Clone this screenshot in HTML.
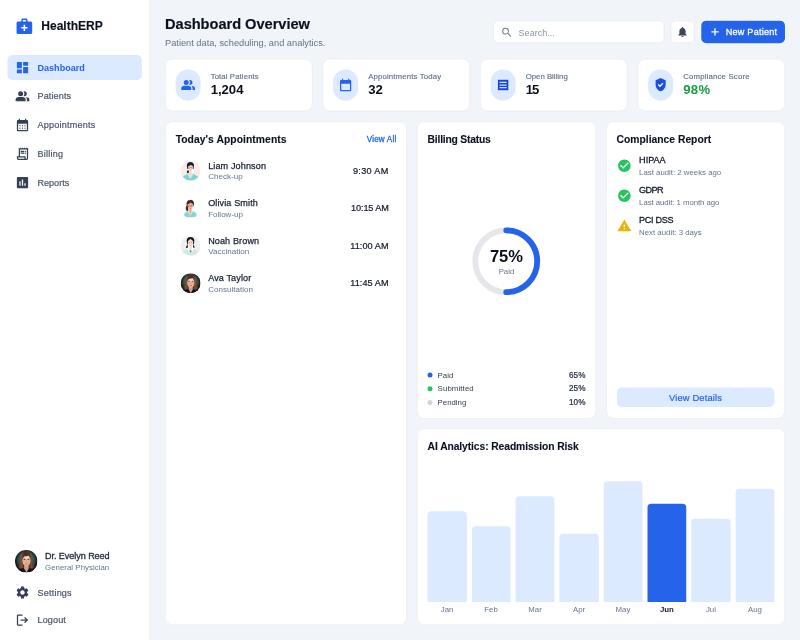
<!DOCTYPE html>
<html lang="en">
<head>
<meta charset="utf-8">
<title>HealthERP Dashboard</title>
<style>
*{box-sizing:border-box;margin:0;padding:0}
html,body{width:800px;height:640px;overflow:hidden;background:#f1f5f9}
body{font-family:"Liberation Sans",sans-serif;color:#0f172a}
#app{width:1280px;height:1024px;transform:scale(.625);transform-origin:0 0;position:relative;background:#f1f5f9;display:flex}
svg{display:block}
/* sidebar */
#side{width:240px;height:1024px;background:#fff;border-right:1px solid #e2e8f0;position:relative;flex:none}
.logo{position:absolute;left:24px;top:26px;height:32px;display:flex;align-items:center}
.logo svg{width:30px;height:30px}
.logo b{margin-left:12px;font-size:19.3px;font-weight:700;letter-spacing:0;color:#0b1120;-webkit-text-stroke:.2px currentColor}
.nav{position:absolute;left:12px;width:215px}
.nav a{display:flex;align-items:center;height:40px;margin-bottom:6px;padding-left:12px;border-radius:8px;color:#475569;font-size:14.5px;font-weight:400;text-decoration:none;-webkit-text-stroke:.3px currentColor}
.nav a svg{width:24px;height:24px;margin-right:12px;flex:none;fill:#334155}
.nav.b a{margin-bottom:4.5px}.nav a.on{background:#dbeafe;color:#2563eb;font-weight:700;-webkit-text-stroke:0}
.nav a.on svg{fill:#2563eb}
.prof{position:absolute;left:24px;top:880px;display:flex;align-items:center}
.prof .av{width:36px;height:36px;border-radius:50%;overflow:hidden;flex:none}
.prof .t{margin-left:12px}
.prof .n{font-size:14.5px;line-height:20px;font-weight:400;color:#1e293b;-webkit-text-stroke:.5px currentColor;letter-spacing:-.1px}
.prof .r{font-size:12.5px;line-height:16px;color:#64748b;letter-spacing:.08px}
/* main */
#main{position:relative;flex:1;height:1024px}
.abs{position:absolute}
h1{position:absolute;left:24px;top:22.2px;font-size:23.4px;line-height:32px;font-weight:700;color:#0b1120;-webkit-text-stroke:.25px currentColor;letter-spacing:-.05px;white-space:nowrap}
.sub{position:absolute;left:24px;top:58px;font-size:14.8px;line-height:20px;color:#64748b;white-space:nowrap}
.search{position:absolute;left:549px;top:33px;width:274px;height:36px;padding-top:2px;background:#fff;border:1px solid #e2e8f0;border-radius:8px;display:flex;align-items:center;font-size:14.5px;color:#8996aa}
.search svg{width:20px;height:20px;margin:0 8.700px 0 11px;fill:#718096}
.bell{position:absolute;left:833.2px;top:33px;width:37.8px;height:36px;background:#fff;border:1px solid #e2e8f0;border-radius:8px;display:flex;align-items:center;justify-content:center}
.bell svg{width:20px;height:20px;fill:#3b4758}
.newp{box-shadow:0 0 0 1.6px rgba(255,255,255,.75);position:absolute;left:882px;top:33px;width:134px;height:36px;background:#2563eb;border-radius:8px;color:#fff;font-size:14.5px;font-weight:400;-webkit-text-stroke:.45px #fff;letter-spacing:.42px;display:flex;align-items:center;white-space:nowrap}
.newp svg{width:20px;height:20px;margin:0 7px 0 12px;fill:#fff}
.card{position:absolute;background:#fff;border:1px solid #e5eaf1;border-radius:12px}
.stat{top:94px;width:236px;height:84px}
.stat .pill{position:absolute;left:16px;top:16px;width:40px;height:50px;border-radius:25px;background:#dbeafe;display:flex;align-items:center;justify-content:center}
.stat .pill svg{width:24px;height:24px;fill:#2563eb}
.stat .l{position:absolute;left:72px;top:18.9px;font-size:12.5px;letter-spacing:.15px;line-height:16px;color:#64748b;white-space:nowrap;-webkit-text-stroke:.25px currentColor}
.stat .v{position:absolute;left:72px;top:35.1px;font-size:21px;line-height:28px;font-weight:700;color:#0b0f1a;white-space:nowrap}
.pt{position:absolute;left:16px;top:16px;font-size:16.5px;line-height:24px;font-weight:700;color:#0b1120;-webkit-text-stroke:.15px currentColor;white-space:nowrap}

.pn{font-size:14.5px;letter-spacing:.2px;line-height:20px;color:#172033;white-space:nowrap;-webkit-text-stroke:.4px currentColor}
.ps{font-size:12.5px;letter-spacing:.15px;line-height:16px;color:#64748b;white-space:nowrap}
.viewall{position:absolute;right:16px;top:20px;font-size:13px;letter-spacing:.25px;line-height:16px;color:#2563eb;white-space:nowrap;-webkit-text-stroke:.45px currentColor}
.row{position:absolute;left:24px;right:24px;height:36px}
.row .av{position:absolute;left:0;top:2px;width:32px;height:32px;border-radius:50%;overflow:hidden}
.row .tx{position:absolute;left:44px;top:-.5px}.row .ps{position:relative;top:.5px;font-size:12.8px;letter-spacing:.05px}
.row .tm{position:absolute;right:4.4px;top:8px;font-size:14.6px;line-height:20px;color:#111827;white-space:nowrap;-webkit-text-stroke:.33px currentColor;letter-spacing:.12px}
.lg{position:absolute;left:16px;right:16px;height:16px;font-size:12.5px;line-height:16px;color:#334155;white-space:nowrap}
.lg i{position:absolute;left:0;top:4px;width:8px;height:8px;border-radius:50%}
.lg span{position:absolute;left:16px;top:0}
.lg b{position:absolute;right:0;top:0;color:#1e293b;font-weight:400;font-size:13px;-webkit-text-stroke:.35px currentColor}
.ci{position:absolute;left:16px;height:36px}
.ci svg{position:absolute;left:0;top:5px;width:24px;height:24px}
.ci .tx{position:absolute;left:36px;top:-1px}.ci .ps{letter-spacing:0;position:relative;top:.8px}
.ci .pn{font-weight:400;letter-spacing:0;position:relative;top:-.7px;color:#111827;-webkit-text-stroke:.45px currentColor}
.vd{position:absolute;left:16px;right:16px;bottom:17.2px;height:31.6px;border-radius:8px;background:#dbeafe;color:#2563eb;font-size:15px;letter-spacing:.2px;line-height:33.5px;text-align:center;-webkit-text-stroke:.3px currentColor}
.bar{position:absolute;bottom:36.500px;width:62.350px;background:#dbeafe;border-radius:6px 6px 0 0}
.bar.on{background:#2563eb}
.bl{position:absolute;bottom:16px;width:62.350px;text-align:center;font-size:12.5px;line-height:16px;color:#64748b}
.bl.on{color:#0f172a;font-weight:700}
</style>
</head>
<body>
<div id="app">
<aside id="side">
  <div class="logo">
    <svg viewBox="0 0 24 24"><path fill="#2563eb" d="M20 6h-4V4c0-1.100-.9-2-2-2h-4C8.900 2 8 2.900 8 4v2H4C2.900 6 2 6.900 2 8v12c0 1.100.9 2 2 2h16c1.100 0 2-.9 2-2V8c0-1.100-.9-2-2-2zM10 4h4v2h-4V4zm6 11h-3v3h-2v-3H8v-2h3v-3h2v3h3v2z"/></svg>
    <b>HealthERP</b>
  </div>
  <nav class="nav" style="top:88px">
    <a class="on"><svg viewBox="0 0 24 24"><path d="M3 13h8V3H3v10zm0 8h8v-6H3v6zm10 0h8V11h-8v10zm0-18v6h8V3h-8z"/></svg>Dashboard</a>
    <a><svg viewBox="0 0 24 24"><path d="M9 12a4 4 0 1 0 0-8 4 4 0 0 0 0 8zm-8 8v-2.800c0-.57.150-1.090.440-1.560.290-.48.680-.840 1.160-1.090 1.030-.52 2.080-.9 3.150-1.160C6.820 13.130 7.900 13 9 13s2.180.130 3.250.390c1.070.260 2.120.640 3.150 1.160.48.250.870.610 1.160 1.090.290.470.440.990.440 1.560V20H1zm18 0v-3c0-.730-.2-1.440-.610-2.110-.410-.680-.990-1.260-1.740-1.740.85.100 1.650.270 2.400.510s1.450.530 2.100.890c.6.330 1.060.7 1.380 1.110.310.410.470.850.470 1.340v3h-4zM19 8c0 1.100-.390 2.040-1.180 2.830C17.040 11.610 16.100 12 15 12c-.180 0-.420-.020-.7-.060-.280-.040-.520-.090-.7-.140.450-.530.800-1.130 1.040-1.780.240-.65.360-1.320.360-2.020s-.120-1.380-.360-2.030A5.900 5.900 0 0 0 13.600 4.200c.230-.080.470-.140.700-.160.230-.030.470-.040.700-.040 1.100 0 2.040.390 2.820 1.180C18.610 5.960 19 6.900 19 8z"/></svg><span style="letter-spacing:.2px">Patients</span></a>
    <a><svg viewBox="0 0 24 24"><path d="M5 22c-.55 0-1.020-.2-1.410-.590C3.200 21.020 3 20.550 3 20V6c0-.55.2-1.020.590-1.410C3.980 4.200 4.450 4 5 4h1V2h2v2h8V2h2v2h1c.55 0 1.020.2 1.410.590.390.390.590.860.590 1.410v14c0 .55-.2 1.020-.590 1.410-.390.390-.860.590-1.410.590H5zm0-2h14V10H5v10zm7-6a1 1 0 1 1 0-2 1 1 0 0 1 0 2zm-4 0a1 1 0 1 1 0-2 1 1 0 0 1 0 2zm8 0a1 1 0 1 1 0-2 1 1 0 0 1 0 2zm-4 4a1 1 0 1 1 0-2 1 1 0 0 1 0 2zm-4 0a1 1 0 1 1 0-2 1 1 0 0 1 0 2zm8 0a1 1 0 1 1 0-2 1 1 0 0 1 0 2z"/></svg><span style="letter-spacing:.35px">Appointments</span></a>
    <a><svg viewBox="0 0 24 24"><path d="M6 22c-.83 0-1.540-.29-2.130-.870C3.290 20.540 3 19.830 3 19v-3h3V2l1.500 1.500L9 2l1.500 1.500L12 2l1.500 1.500L15 2l1.500 1.500L18 2l1.500 1.500L21 2v17c0 .83-.29 1.540-.870 2.130-.590.580-1.300.870-2.130.870H6zm12-2c.28 0 .52-.1.710-.29.190-.19.290-.43.290-.710V5H8v11h9v3c0 .28.100.52.290.71.190.19.430.29.710.29zM9 9V7h6v2H9zm0 3v-2h6v2H9zm8-3a1 1 0 1 1 0-2 1 1 0 0 1 0 2zm0 3a1 1 0 1 1 0-2 1 1 0 0 1 0 2zM6 20h9v-2H5v1c0 .28.100.52.290.71.190.19.430.29.710.29z"/></svg><span style="letter-spacing:.35px">Billing</span></a>
    <a><svg viewBox="0 0 24 24"><path d="M19 3H5c-1.100 0-2 .9-2 2v14c0 1.100.9 2 2 2h14c1.100 0 2-.9 2-2V5c0-1.100-.9-2-2-2zM9 17H7v-7h2v7zm4 0h-2V7h2v10zm4 0h-2v-4h2v4z"/></svg>Reports</a>
  </nav>
  <div class="prof">
    <div class="av"><svg viewBox="0 0 36 36" width="36" height="36"><defs><radialGradient id="pbe" cx=".5" cy=".45" r=".54"><stop offset="0" stop-color="#6a8a86"/><stop offset=".6" stop-color="#3a5855"/><stop offset=".86" stop-color="#15221f"/><stop offset="1" stop-color="#030505"/></radialGradient><linearGradient id="phe" x1="0" x2="1"><stop offset="0" stop-color="#3e261a"/><stop offset=".2" stop-color="#7e563c"/><stop offset=".36" stop-color="#4a2e20"/><stop offset=".64" stop-color="#4e3222"/><stop offset=".8" stop-color="#7a5238"/><stop offset="1" stop-color="#38221a"/></linearGradient><filter id="pfe" x="-10%" y="-10%" width="120%" height="120%"><feGaussianBlur stdDeviation=".6"/></filter></defs><rect width="36" height="36" fill="url(#pbe)"/><g filter="url(#pfe)"><path d="M18.300 2.300c-5.800 0-9.200 3.600-9.800 9.600-.5 5.400-1.700 9.800-4 14.600 1.800 2.600 4.600 4.300 7.500 4.800h12.600c2.900-.5 5.700-2.200 7.500-4.800-2.300-4.800-3.500-9.200-4-14.600-.6-6-4-9.600-9.800-9.600z" fill="url(#phe)"/><path d="M3 36c.6-3.800 4-6.200 8.800-7h12.400c4.800.8 8.200 3.200 8.800 7z" fill="#10151f"/><path d="M14.600 25h7.200v4.500L18.300 36l-3.700-6.500z" fill="#d49d80"/><ellipse cx="18.300" cy="16.800" rx="6.500" ry="9.500" fill="#e2b49a"/><ellipse cx="19" cy="12.500" rx="4" ry="3.600" fill="#f4dccb" opacity=".85"/><ellipse cx="15" cy="19" rx="1.800" ry="2.200" fill="#e8a58e" opacity=".5"/><ellipse cx="21.800" cy="19" rx="1.800" ry="2.200" fill="#e8a58e" opacity=".5"/><path d="M11.600 15c.2-6 2.600-9 6.700-9s6.500 3 6.700 9c-1-3.200-2.200-5.200-3.400-6.300-1.900 1.200-4.900 1.700-6.700 1.200-1.400 1.300-2.500 2.900-3.300 5.100z" fill="#4e3222"/><ellipse cx="15.300" cy="14.600" rx="1.700" ry=".8" fill="#33231f"/><ellipse cx="21.300" cy="14.600" rx="1.700" ry=".8" fill="#33231f"/><path d="M17.700 15.500h1.200v4h-1.200z" fill="#c48e74" opacity=".7"/><ellipse cx="18.300" cy="22.300" rx="2.100" ry=".9" fill="#c25f66"/></g></svg></div>
    <div class="t"><div class="n">Dr. Evelyn Reed</div><div class="r">General Physician</div></div>
  </div>
  <nav class="nav b" style="top:927.5px">
    <a><svg viewBox="0 0 24 24"><path d="M19.140 12.940c.04-.3.060-.610.060-.940 0-.320-.020-.640-.070-.940l2.030-1.580a.490.490 0 0 0 .120-.610l-1.920-3.320a.488.488 0 0 0-.590-.220l-2.390.960c-.5-.380-1.030-.7-1.620-.940l-.360-2.540a.484.484 0 0 0-.480-.410h-3.840c-.240 0-.430.170-.470.410l-.360 2.540c-.590.240-1.130.570-1.620.940l-2.390-.960c-.220-.080-.470 0-.590.220L2.740 8.870c-.120.210-.080.470.120.610l2.030 1.580c-.050.300-.090.630-.090.940s.020.640.070.940l-2.030 1.580a.490.490 0 0 0-.120.610l1.920 3.320c.120.220.370.290.590.220l2.390-.960c.5.380 1.030.7 1.620.940l.360 2.540c.05.240.240.410.480.410h3.840c.240 0 .440-.170.470-.410l.360-2.540c.590-.240 1.130-.560 1.620-.940l2.390.960c.220.080.470 0 .590-.220l1.920-3.320c.120-.220.070-.470-.120-.610l-2.010-1.580zM12 15.600c-1.980 0-3.600-1.620-3.600-3.600s1.620-3.600 3.600-3.600 3.600 1.620 3.600 3.600-1.620 3.600-3.600 3.600z"/></svg><span style="letter-spacing:.32px">Settings</span></a>
    <a><svg viewBox="0 0 24 24"><path d="M5 21c-.55 0-1.020-.2-1.410-.590C3.200 20.020 3 19.550 3 19V5c0-.55.2-1.020.590-1.410C3.980 3.200 4.450 3 5 3h7v2H5v14h7v2H5zm11-4-1.380-1.450 2.550-2.550H9v-2h8.180l-2.550-2.550L16 7l5 5-5 5z"/></svg><span style="letter-spacing:.19px">Logout</span></a>
  </nav>
</aside>
<main id="main">
  <h1>Dashboard Overview</h1>
  <div class="sub">Patient data, scheduling, and analytics.</div>
  <div class="search"><svg viewBox="0 0 24 24"><path d="M15.500 14h-.79l-.28-.27A6.471 6.471 0 0 0 16 9.500 6.500 6.500 0 1 0 9.500 16c1.610 0 3.090-.59 4.230-1.570l.27.28v.79l5 4.990L20.490 19l-4.990-5zm-6 0C7.010 14 5 11.990 5 9.500S7.010 5 9.500 5 14 7.010 14 9.500 11.990 14 9.500 14z"/></svg>Search...</div>
  <div class="bell"><svg viewBox="0 0 24 24"><path d="M12 22c1.100 0 2-.9 2-2h-4a2 2 0 0 0 2 2zm6-6v-5c0-3.070-1.640-5.640-4.500-6.320V4c0-.83-.67-1.500-1.500-1.500s-1.500.67-1.500 1.500v.68C7.630 5.360 6 7.920 6 11v5l-2 2v1h16v-1l-2-2z"/></svg></div>
  <div class="newp"><svg viewBox="0 0 24 24"><path d="M19 13.300h-5.700V19h-2.600v-5.700H5v-2.600h5.700V5h2.600v5.700H19z"/></svg>New Patient</div>
  <div class="card stat" style="left:24px"><div class="pill"><svg viewBox="0 0 24 24"><path d="M9 12a4 4 0 1 0 0-8 4 4 0 0 0 0 8zm-8 8v-2.800c0-.57.150-1.090.440-1.560.290-.48.680-.840 1.160-1.090 1.030-.52 2.080-.9 3.150-1.160C6.820 13.130 7.900 13 9 13s2.180.130 3.250.390c1.070.260 2.120.640 3.150 1.160.48.250.870.610 1.160 1.090.290.470.440.990.440 1.560V20H1zm18 0v-3c0-.730-.2-1.440-.610-2.110-.410-.680-.990-1.260-1.740-1.740.85.100 1.650.270 2.400.510s1.450.530 2.100.890c.6.330 1.060.7 1.380 1.110.310.410.470.850.470 1.340v3h-4zM19 8c0 1.100-.390 2.040-1.180 2.830C17.040 11.610 16.100 12 15 12c-.180 0-.420-.020-.7-.060-.280-.040-.520-.090-.7-.140.450-.530.800-1.130 1.040-1.780.240-.65.360-1.320.360-2.020s-.120-1.380-.360-2.030A5.900 5.900 0 0 0 13.600 4.200c.230-.080.470-.140.700-.160.230-.030.470-.040.700-.040 1.100 0 2.040.390 2.820 1.180C18.610 5.960 19 6.900 19 8z"/></svg></div><div class="l">Total Patients</div><div class="v">1,204</div></div>
  <div class="card stat" style="left:276px"><div class="pill"><svg viewBox="0 0 24 24"><path d="M5 22c-.55 0-1.020-.2-1.410-.590C3.200 21.020 3 20.550 3 20V6c0-.55.2-1.020.590-1.410C3.980 4.200 4.450 4 5 4h1V2h2v2h8V2h2v2h1c.55 0 1.020.2 1.410.590.390.390.590.860.590 1.410v14c0 .55-.2 1.020-.590 1.410-.390.390-.860.590-1.410.590H5zm0-2h14V10H5v10z"/></svg></div><div class="l" style="letter-spacing:.22px">Appointments Today</div><div class="v">32</div></div>
  <div class="card stat" style="left:528px"><div class="pill"><svg viewBox="0 0 24 24"><path fill="#1745dc" stroke="#f4f8ff" stroke-width="1" paint-order="stroke" d="M3.600 3.600h16.800v16.800H3.600z"/><path fill="#cfe0fd" d="M6.300 6.800h11.400v2H6.300zM6.300 11h11.400v2H6.300zM6.300 15.200h11.400v2H6.300z"/></svg></div><div class="l" style="letter-spacing:0">Open Billing</div><div class="v" style="letter-spacing:-1.5px">15</div></div>
  <div class="card stat" style="left:780px"><div class="pill"><svg viewBox="0 0 24 24"><path fill="#1b4ee2" stroke="#f4f8ff" stroke-width="1.1" paint-order="stroke" d="M12 .900 3.900 4.200v6.900c0 5.050 3.450 9.760 8.100 10.910 4.650-1.150 8.100-5.860 8.100-10.910V4.200L12 .900z"/><path fill="#fff" d="M10.900 15.400 7.400 11.900l1.410-1.410 2.100 2.100 4.240-4.240 1.410 1.410-5.660 5.640z"/></svg></div><div class="l" style="letter-spacing:.28px">Compliance Score</div><div class="v" style="color:#14a03e;letter-spacing:.6px">98%</div></div>
  <div class="card" style="left:24px;top:194px;width:387.200px;height:806px"><div class="pt" style="letter-spacing:.11px">Today's Appointments</div><div class="viewall">View All</div>
    <div class="row" style="top:60px"><div class="av"><svg viewBox="0 0 32 32" width="32" height="32"><defs><filter id="ifa" x="-10%" y="-10%" width="120%" height="120%"><feGaussianBlur stdDeviation=".35"/></filter></defs><rect width="32" height="32" fill="#fcebe6"/><g filter="url(#ifa)"><path d="M15.600 1.300c-4.200 0-7 3-6.900 7.200.1 2.400.6 4.600 1.500 6.200-1.200 1.500-1.300 4.300.2 6.300l3.400 1h4.500l1.500-4c2-1.600 3.200-5 3.100-9.200C22.800 4.300 19.800 1.300 15.600 1.300z" fill="#fff"/><path d="M3.200 26.200c1.200-2.300 5.600-4.200 9.800-5.800l2.600 1.200 2.600-1.200c4.200 1.600 8.600 3.500 9.800 5.800L26 33H5z" fill="#7fd3d3"/><path d="M12.600 20.500l-1.500 1.100 4.100 7.600.4-6zM18.600 20.500l1.500 1.100-4.100 7.600-.4-6z" fill="#c8eeee"/><path d="M13.700 15.500h3.900v5.200l-1.900 7.700-2-7.700z" fill="#fbd9c8"/><path d="M11.500 15.300c-1.500.6-2 2.600-1 4.600.8.500 1.900.3 2.600-.4.300-1.400.1-3-.4-4.200z" fill="#16202e"/><path d="M11.700 9.500c0-2.500 1.700-3.800 3.900-3.800s4.100 1.300 4.100 3.800c0 3.600-1.700 7.200-4.100 7.200s-3.900-3.600-3.900-7.200z" fill="#fbd9c8"/><path d="M15.600 2.300c-3.600 0-5.900 2.500-5.800 6.200 0 1.900.5 3.900 1.300 5.400l1-.4c-.5-1.700-.6-3.400-.3-4.600 1.800-.3 3.600-1.200 4.700-2.500 1 1.300 2.300 2.100 3.500 2.400.3 1.500.2 3.100-.2 4.600l.7.300c.7-1.400 1-3.300 1-5.200.1-3.700-2.300-6.200-5.900-6.200z" fill="#16202e"/><g fill="#eef5f3" fill-opacity=".2" stroke="#3f5c68" stroke-width=".45"><rect x="11.9" y="10.2" width="3.3" height="2.3" rx=".7"/><rect x="16.5" y="10.2" width="3.3" height="2.3" rx=".7"/><path d="M15.200 11h1.300M11.900 10.800h-1M19.800 10.800h1" fill="none"/></g><circle cx="13.5" cy="11.4" r=".42" fill="#2b3a44"/><circle cx="18.1" cy="11.4" r=".42" fill="#2b3a44"/><ellipse cx="15.700" cy="15.300" rx=".9" ry=".5" fill="#e0524c"/></g></svg></div><div class="tx"><div class="pn">Liam Johnson</div><div class="ps">Check-up</div></div><div class="tm" style="letter-spacing:.5px">9:30 AM</div></div>
    <div class="row" style="top:120px"><div class="av"><svg viewBox="0 0 32 32" width="32" height="32"><defs><filter id="ifb" x="-10%" y="-10%" width="120%" height="120%"><feGaussianBlur stdDeviation=".35"/></filter></defs><rect width="32" height="32" fill="#fdfefe"/><g filter="url(#ifb)"><path d="M5.600 27.500c-.4-3 2.400-5.600 7.400-7.300l2.600 1.200 2.600-1.200c5 1.700 7.800 4.300 7.400 7.300-.3 1.900-2.200 3.100-4.600 3.100H10.200c-2.400 0-4.300-1.200-4.600-3.100z" fill="#86d6d8"/><path d="M12.800 20.300l-1.500 1.100 4 7.200.4-5.800zM18.400 20.300l1.500 1.100-4 7.200-.4-5.800z" fill="#c9f0f0"/><path d="M13.600 16.500h4v4.200l-1.900 7.400-2.100-7.400z" fill="#f3b088"/><path d="M10.600 11.500c-2.200 1.200-3.100 4.200-1.900 7.600.6 1.300 1.900 1.800 3.200 1.300.6-1.600.6-3.600 0-5.400-.5-1.500-.9-2.600-1.300-3.500z" fill="#4a2a22"/><path d="M11.200 10.600c0-2.700 1.900-4.200 4.300-4.200s4.300 1.500 4.300 4.200c0 3.800-1.800 7.700-4.300 7.700s-4.300-3.900-4.300-7.700z" fill="#f3b088"/><path d="M15.400 2.800c-3.800 0-6.100 2.600-6 6.400 0 2 .6 4.100 1.400 5.600l.9-.4c-.5-1.700-.7-3.600-.4-4.900 1.800-.3 3.700-1.200 4.900-2.600 1 1.300 2.300 2.200 3.500 2.500.2 1 .2 2 .1 3l.9.200c.5-1.100.7-2.300.7-3.400.1-3.800-2.200-6.400-6-6.400z" fill="#4a2a22"/><g fill="#eef5f3" fill-opacity=".18" stroke="#587480" stroke-width=".42"><rect x="11.6" y="11.2" width="3.4" height="2.2" rx=".7"/><rect x="16.200" y="11.2" width="3.4" height="2.2" rx=".7"/><path d="M15 11.900h1.200M11.600 11.700h-1M19.600 11.700h1" fill="none"/></g><circle cx="13.3" cy="12.3" r=".42" fill="#3a2a26"/><circle cx="17.9" cy="12.3" r=".42" fill="#3a2a26"/><ellipse cx="15.700" cy="16.300" rx=".9" ry=".55" fill="#d9453f"/></g></svg></div><div class="tx"><div class="pn">Olivia Smith</div><div class="ps">Follow-up</div></div><div class="tm" style="letter-spacing:-.2px">10:15 AM</div></div>
    <div class="row" style="top:180px"><div class="av"><svg viewBox="0 0 32 32" width="32" height="32"><defs><filter id="ifc" x="-10%" y="-10%" width="120%" height="120%"><feGaussianBlur stdDeviation=".35"/></filter></defs><rect width="32" height="32" fill="#eeeff1"/><g filter="url(#ifc)"><path d="M15.800 1c-4.300 0-7.300 3-7.200 7.400.1 2.500.5 4.700 1.200 6.300-1.800 1.800-2.300 4.300-1.700 6.600l4.400-1h7l4 .6c.5-2.400-.1-4.800-1.700-6.400.7-1.700 1.100-3.800 1.200-6.100C23.100 4 20.100 1 15.800 1z" fill="#fff"/><path d="M3.200 26c1.200-2.400 5.400-4.500 9.800-6l2.800 1.600 2.800-1.600c4.400 1.500 8.600 3.600 9.800 6L26 33H5z" fill="#cfeae4"/><path d="M12.800 19.600l-2.300 1.500 3 5.400 2-2.500zM18.800 19.600l2.300 1.500-3 5.400-2-2.500z" fill="#fff"/><path d="M14.200 23.400h3.200l-.4 3.200h-2.400z" fill="#2f9c9c"/><path d="M13.800 15h4v5.300l-2 3.800-2-3.800z" fill="#fbdccb"/><path d="M10.800 14.500c-1.500 1.300-2.200 3.500-1.900 5.800l2.800-1.300c.3-1.600 0-3.200-.9-4.500zM20.700 14.500c1.300 1.200 1.900 3.200 1.600 5.200l-2.500-1c-.2-1.500.1-3 .9-4.200z" fill="#12161e"/><path d="M11.800 9.400c0-2.600 1.700-4 4-4s4 1.400 4 4c0 3.800-1.600 8-4 8s-4-4.200-4-8z" fill="#fbdccb"/><path d="M15.800 2c-3.900 0-6.300 2.600-6.200 6.400.1 2.300.6 4.500 1.500 6.200l1-.5c-.6-2-.7-4-.3-5.500 1.400-.5 2.900-1.700 4-3.400 1.100 1.700 2.600 2.900 4 3.400.4 1.500.3 3.500-.3 5.500l1 .5c.9-1.700 1.400-3.900 1.500-6.200C22.100 4.600 19.700 2 15.800 2z" fill="#12161e"/><ellipse cx="14.100" cy="11.200" rx=".75" ry=".5" fill="#3a4a5a"/><ellipse cx="17.600" cy="11.200" rx=".75" ry=".5" fill="#3a4a5a"/><ellipse cx="15.800" cy="15.200" rx=".85" ry=".5" fill="#e2665e"/></g></svg></div><div class="tx"><div class="pn">Noah Brown</div><div class="ps">Vaccination</div></div><div class="tm">11:00 AM</div></div>
    <div class="row" style="top:240px"><div class="av"><svg viewBox="0 0 36 36" width="32" height="32"><defs><radialGradient id="pbd" cx=".5" cy=".45" r=".54"><stop offset="0" stop-color="#6a8a86"/><stop offset=".6" stop-color="#3a5855"/><stop offset=".86" stop-color="#15221f"/><stop offset="1" stop-color="#030505"/></radialGradient><linearGradient id="phd" x1="0" x2="1"><stop offset="0" stop-color="#3e261a"/><stop offset=".2" stop-color="#7e563c"/><stop offset=".36" stop-color="#4a2e20"/><stop offset=".64" stop-color="#4e3222"/><stop offset=".8" stop-color="#7a5238"/><stop offset="1" stop-color="#38221a"/></linearGradient><filter id="pfd" x="-10%" y="-10%" width="120%" height="120%"><feGaussianBlur stdDeviation=".6"/></filter></defs><rect width="36" height="36" fill="url(#pbd)"/><g filter="url(#pfd)"><path d="M18.300 2.300c-5.800 0-9.200 3.600-9.800 9.600-.5 5.400-1.700 9.800-4 14.600 1.800 2.600 4.600 4.300 7.500 4.800h12.600c2.900-.5 5.700-2.200 7.500-4.800-2.300-4.800-3.500-9.200-4-14.600-.6-6-4-9.600-9.800-9.600z" fill="url(#phd)"/><path d="M3 36c.6-3.800 4-6.200 8.800-7h12.400c4.800.8 8.200 3.200 8.800 7z" fill="#10151f"/><path d="M14.600 25h7.200v4.500L18.300 36l-3.700-6.500z" fill="#d49d80"/><ellipse cx="18.300" cy="16.800" rx="6.500" ry="9.500" fill="#e2b49a"/><ellipse cx="19" cy="12.500" rx="4" ry="3.600" fill="#f4dccb" opacity=".85"/><ellipse cx="15" cy="19" rx="1.800" ry="2.200" fill="#e8a58e" opacity=".5"/><ellipse cx="21.800" cy="19" rx="1.800" ry="2.200" fill="#e8a58e" opacity=".5"/><path d="M11.600 15c.2-6 2.600-9 6.700-9s6.500 3 6.700 9c-1-3.200-2.200-5.200-3.400-6.300-1.900 1.200-4.900 1.700-6.700 1.200-1.400 1.300-2.500 2.900-3.300 5.100z" fill="#4e3222"/><ellipse cx="15.300" cy="14.600" rx="1.700" ry=".8" fill="#33231f"/><ellipse cx="21.300" cy="14.600" rx="1.700" ry=".8" fill="#33231f"/><path d="M17.700 15.500h1.200v4h-1.200z" fill="#c48e74" opacity=".7"/><ellipse cx="18.300" cy="22.300" rx="2.100" ry=".9" fill="#c25f66"/></g></svg></div><div class="tx"><div class="pn">Ava Taylor</div><div class="ps">Consultation</div></div><div class="tm">11:45 AM</div></div>
  </div>
  <div class="card" style="left:427.200px;top:194px;width:286.400px;height:475.5px"><div class="pt" style="letter-spacing:-.33px">Billing Status</div>
    <svg class="abs" style="left:86.200px;top:166.600px" width="112" height="112" viewBox="0 0 36 36"><circle cx="18" cy="18" r="15.9155" fill="none" stroke="#e5e7eb" stroke-width="3"/><path d="M18 2.0845a15.9155 15.9155 0 0 1 0 31.831" fill="none" stroke="#2563eb" stroke-width="3" stroke-linecap="round"/></svg>
    <div class="abs" style="left:0;right:0;top:199.4px;text-align:center;font-size:26.5px;line-height:32px;font-weight:700;color:#0b0f1a">75%</div>
    <div class="abs" style="left:0;right:0;top:231px;text-align:center;font-size:12.5px;line-height:16px;color:#64748b">Paid</div>
    <div class="lg" style="top:397px"><i style="background:#2563eb"></i><span>Paid</span><b>65%</b></div>
    <div class="lg" style="top:419px"><i style="background:#22c55e"></i><span style="letter-spacing:.18px">Submitted</span><b>25%</b></div>
    <div class="lg" style="top:441px"><i style="background:#d1d5db"></i><span>Pending</span><b>10%</b></div>
  </div>
  <div class="card" style="left:729.600px;top:194px;width:286.400px;height:475.5px"><div class="pt">Compliance Report</div>
    <div class="ci" style="top:53px"><svg viewBox="0 0 24 24"><path fill="#22c55e" d="M12 2C6.480 2 2 6.480 2 12s4.480 10 10 10 10-4.480 10-10S17.520 2 12 2zm-2 15-5-5 1.410-1.410L10 14.170l7.590-7.590L19 8l-9 9z"/></svg><div class="tx"><div class="pn">HIPAA</div><div class="ps">Last audit: 2 weeks ago</div></div></div>
    <div class="ci" style="top:101px"><svg viewBox="0 0 24 24"><path fill="#22c55e" d="M12 2C6.480 2 2 6.480 2 12s4.480 10 10 10 10-4.480 10-10S17.520 2 12 2zm-2 15-5-5 1.410-1.410L10 14.170l7.590-7.590L19 8l-9 9z"/></svg><div class="tx"><div class="pn" style="letter-spacing:-.9px">GDPR</div><div class="ps" style="letter-spacing:-.1px">Last audit: 1 month ago</div></div></div>
    <div class="ci" style="top:149px"><svg viewBox="0 0 24 24"><path fill="#eab308" d="M1 21h22L12 2 1 21zm12-3h-2v-2h2v2zm0-4h-2v-4h2v4z"/></svg><div class="tx"><div class="pn" style="letter-spacing:-.5px">PCI DSS</div><div class="ps">Next audit: 3 days</div></div></div>
    <div class="vd">View Details</div>
  </div>
  <div class="card" style="left:427.200px;top:684.5px;width:588.800px;height:315.5px"><div class="pt" style="letter-spacing:-.15px">AI Analytics: Readmission Risk</div>
    <div class="bar" style="left:16.00px;height:144.8px"></div><div class="bl" style="left:16.00px">Jan</div>
    <div class="bar" style="left:86.35px;height:120.5px"></div><div class="bl" style="left:86.35px">Feb</div>
    <div class="bar" style="left:156.70px;height:168.6px"></div><div class="bl" style="left:156.70px">Mar</div>
    <div class="bar" style="left:227.05px;height:108.5px"></div><div class="bl" style="left:227.05px">Apr</div>
    <div class="bar" style="left:297.40px;height:192.8px"></div><div class="bl" style="left:297.40px">May</div>
    <div class="bar on" style="left:367.75px;height:156.6px"></div><div class="bl on" style="left:367.75px">Jun</div>
    <div class="bar" style="left:438.10px;height:132.5px"></div><div class="bl" style="left:438.10px">Jul</div>
    <div class="bar" style="left:508.45px;height:180.8px"></div><div class="bl" style="left:508.45px">Aug</div>
  </div>
</main>
</div>
</body>
</html>
